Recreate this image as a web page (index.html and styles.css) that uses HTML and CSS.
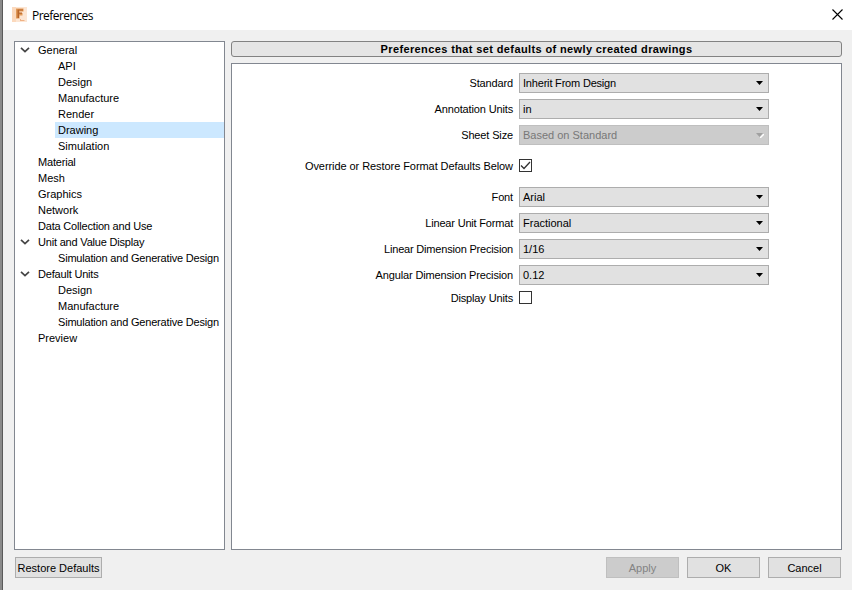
FILE: index.html
```html
<!DOCTYPE html>
<html lang="en">
    <head>
        <meta charset="UTF-8">
        <title>Preferences</title>
        <link rel="stylesheet" href="styles.css">
    </head>
    <body>
        <div class="dialog">

            <div class="titlebar">
                <svg class="logo" width="15" height="15" viewBox="0 0 15 15">
                    <rect width="15" height="15" fill="#fce6d4"/>
                    <path d="M0 0H4V15H0Z" fill="#fbd9bd"/>
                    <path d="M4 1.5H11.5V4.5H7.5V6H10.5V8.5H7.5V11.5H4Z" fill="#e19a58"/>
                    <path d="M5.5 2.5V11H7V6.7H10V5.5H7V3.5H11V2.5Z" fill="#b8652a"/>
                    <path d="M8 12H9V13H12.5V14H8Z" fill="#efb184"/>
                </svg>
                <span class="title">Preferences</span>
                <svg class="close" width="11" height="11" viewBox="0 0 11 11">
                    <path d="M0.5 0.5L10.5 10.5M10.5 0.5L0.5 10.5" stroke="#000" stroke-width="1.1"/>
                </svg>
            </div>

            <div class="main">
                <ul class="tree">
                    <li class="open"><svg class="arrow" width="10" height="6" viewBox="0 0 10 6"><path d="M1 0.8L5 4.6L9 0.8"/></svg>General</li>
                    <li class="child">API</li>
                    <li class="child">Design</li>
                    <li class="child">Manufacture</li>
                    <li class="child">Render</li>
                    <li class="child selected">Drawing</li>
                    <li class="child">Simulation</li>
                    <li class="tight">Material</li>
                    <li>Mesh</li>
                    <li>Graphics</li>
                    <li>Network</li>
                    <li class="tight">Data Collection and Use</li>
                    <li class="open tight"><svg class="arrow" width="10" height="6" viewBox="0 0 10 6"><path d="M1 0.8L5 4.6L9 0.8"/></svg>Unit and Value Display</li>
                    <li class="child tight">Simulation and Generative Design</li>
                    <li class="open tight"><svg class="arrow" width="10" height="6" viewBox="0 0 10 6"><path d="M1 0.8L5 4.6L9 0.8"/></svg>Default Units</li>
                    <li class="child">Design</li>
                    <li class="child">Manufacture</li>
                    <li class="child tight">Simulation and Generative Design</li>
                    <li>Preview</li>
                </ul>

                <div class="content">
                    <div class="banner">Preferences that set defaults of newly created drawings</div>
                    <div class="panel">
                        <div class="row">
                            <label>Standard</label>
                            <div class="select"><span class="tight">Inherit From Design</span><svg class="caret" width="7" height="4" viewBox="0 0 7 4"><path d="M0 0H7L3.5 4Z"/></svg></div>
                        </div>
                        <div class="row">
                            <label>Annotation Units</label>
                            <div class="select">in<svg class="caret" width="7" height="4" viewBox="0 0 7 4"><path d="M0 0H7L3.5 4Z"/></svg></div>
                        </div>
                        <div class="row">
                            <label>Sheet Size</label>
                            <div class="select disabled">Based on Standard<svg class="caret" width="8" height="5" viewBox="0 0 8 5"><path class="shine" d="M8 1V2L5 5H4V4L7 1Z"/><path d="M0 0H7L3.5 4Z"/></svg></div>
                        </div>
                        <div class="row override">
                            <label>Override or Restore Format Defaults Below</label>
                            <div class="checkbox"><svg width="11" height="11" viewBox="0 0 11 11"><path d="M1 5.5L4 8.5L10 2" fill="none" stroke="#333" stroke-width="1.3"/></svg></div>
                        </div>
                        <div class="row">
                            <label>Font</label>
                            <div class="select">Arial<svg class="caret" width="7" height="4" viewBox="0 0 7 4"><path d="M0 0H7L3.5 4Z"/></svg></div>
                        </div>
                        <div class="row">
                            <label class="tight">Linear Unit Format</label>
                            <div class="select">Fractional<svg class="caret" width="7" height="4" viewBox="0 0 7 4"><path d="M0 0H7L3.5 4Z"/></svg></div>
                        </div>
                        <div class="row">
                            <label class="tight">Linear Dimension Precision</label>
                            <div class="select">1/16<svg class="caret" width="7" height="4" viewBox="0 0 7 4"><path d="M0 0H7L3.5 4Z"/></svg></div>
                        </div>
                        <div class="row">
                            <label>Angular Dimension Precision</label>
                            <div class="select">0.12<svg class="caret" width="7" height="4" viewBox="0 0 7 4"><path d="M0 0H7L3.5 4Z"/></svg></div>
                        </div>
                        <div class="row units">
                            <label>Display Units</label>
                            <div class="checkbox"></div>
                        </div>
                    </div>
                </div>
            </div>

            <div class="footer">
                <button class="restore">Restore Defaults</button>
                <button disabled>Apply</button>
                <button>OK</button>
                <button>Cancel</button>
            </div>

        </div>
    </body>
</html>
```
FILE: styles.css
```css
* {
    box-sizing: border-box;
}

body {
    margin: 0;
    font-family: "Liberation Sans", Arial, sans-serif;
    font-size: 11px;
    color: #000;
    background-color: #8a8a8a;
}

.dialog {
    width: 850px;
    height: 590px;
    margin-left: 2px;
    display: flex;
    flex-direction: column;
    background-color: #f0f0f0;
    border-left: 1px solid #5a5a5a;
    overflow: hidden;
}

/* Title bar */
.titlebar {
    height: 30px;
    display: flex;
    align-items: center;
    padding: 0 9px 1px 9px;
    background-color: #fff;
}

.title {
    flex: 1;
    margin: 1px 0 0 5px;
    font-family: "Open Sans", sans-serif;
    font-size: 12px;
    letter-spacing: -0.55px;
}

.main {
    display: flex;
    gap: 6px;
    height: 509px;
    margin: 11px 10px 0 11px;
}

/* Category tree */
.tree {
    width: 211px;
    margin: 0;
    padding: 0;
    list-style: none;
    background-color: #fff;
    border: 1px solid #828790;
}

.tree li {
    height: 16px;
    line-height: 16px;
    padding-left: 23px;
    white-space: nowrap;
}

.tree .open {
    display: flex;
    align-items: center;
    padding-left: 5px;
}

.tree .child {
    margin-left: 40px;
    padding-left: 3px;
}

.tree .selected {
    background-color: #cce8ff;
}

.tight,
.row .tight {
    letter-spacing: -0.19px;
}

.arrow {
    margin-right: 8px;
    fill: none;
    stroke: #444;
    stroke-width: 1.7;
}

/* Right side */
.content {
    flex: 1;
    display: flex;
    flex-direction: column;
    gap: 6px;
}

.banner {
    height: 16px;
    line-height: 15px;
    text-align: center;
    font-weight: bold;
    letter-spacing: 0.38px;
    background-color: #e5e5e5;
    border: 1px solid #828282;
    border-radius: 3px;
}

.panel {
    flex: 1;
    padding-top: 9px;
    background-color: #fff;
    border: 1px solid #828790;
}

.row {
    display: grid;
    grid-template-columns: 281px 250px;
    column-gap: 6px;
    align-items: center;
    height: 20px;
    margin-bottom: 6px;
}

.row label {
    text-align: right;
    white-space: nowrap;
    letter-spacing: -0.14px;
}

.select {
    height: 20px;
    line-height: 19px;
    display: flex;
    align-items: center;
    justify-content: space-between;
    padding: 0 5px 0 3px;
    background-color: #e1e1e1;
    border: 1px solid #adadad;
}

.select.disabled {
    padding-right: 4px;
    color: #787878;
    background-color: #ccc;
    border-color: #bfbfbf;
}

.disabled .caret {
    fill: #a0a0a0;
}

.disabled .shine {
    fill: #fff;
}

.checkbox {
    width: 13px;
    height: 13px;
    border: 1px solid #333;
    background-color: #fff;
}

.checkbox svg {
    display: block;
}

.override {
    height: 13px;
    margin: 14px 0 15px;
}

.override label {
    letter-spacing: -0.07px;
}

.units {
    height: 13px;
}

/* Bottom buttons */
.footer {
    display: flex;
    gap: 8px;
    margin: 7px 11px 0 12px;
}

.footer button {
    width: 73px;
    height: 21px;
    padding: 0;
    font-family: inherit;
    font-size: 11px;
    color: #000;
    background-color: #e1e1e1;
    border: 1px solid #adadad;
}

.footer button:disabled {
    color: #838383;
    background-color: #ccc;
    border-color: #bfbfbf;
}

.footer .restore {
    width: 87px;
    margin-right: auto;
}
```
